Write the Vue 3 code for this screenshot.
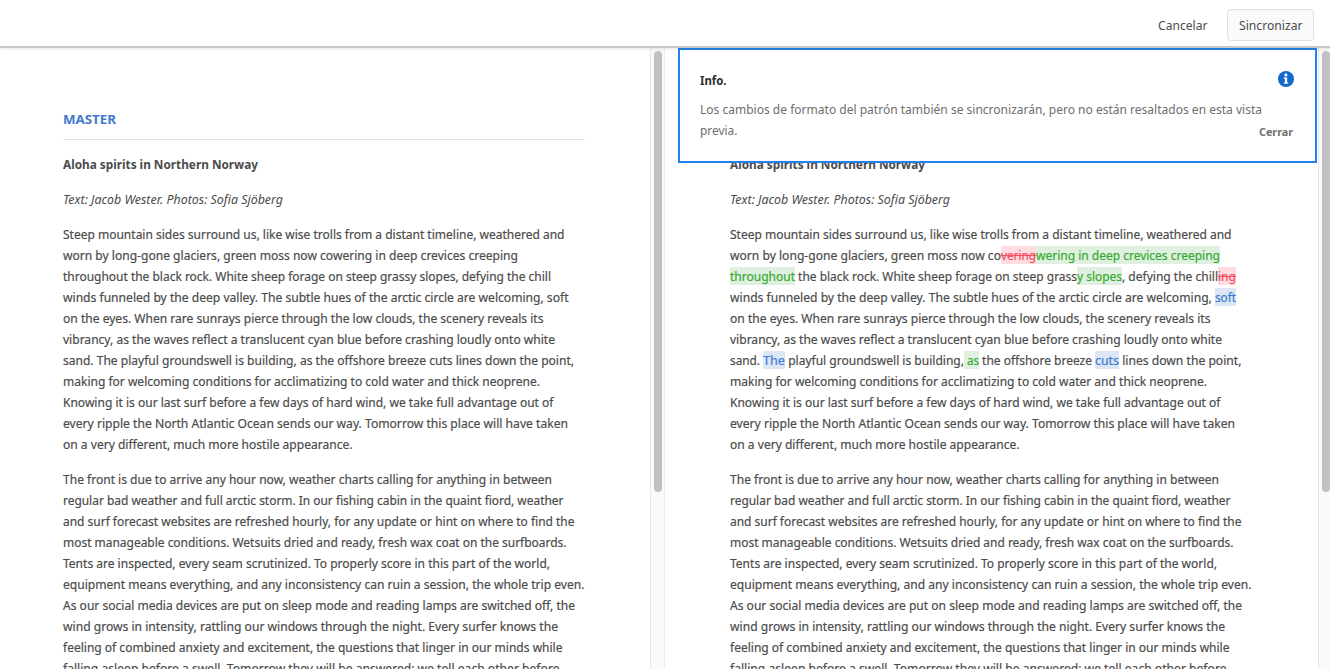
<script setup>
// Stretches a run of text horizontally so that it fills the given width.
const vFit = {
  mounted(el, binding) {
    const natural = el.getBoundingClientRect().width
    if (natural > 0) {
      el.style.transform = `scaleX(${binding.value / natural})`
      el.parentElement.style.width = `${binding.value}px`
    }
  },
}

const line = (w, t) => [{ w, t }]

const title = line(195, 'Aloha spirits in Northern Norway')
const byline = line(220, 'Text: Jacob Wester. Photos: Sofia Sjöberg')

const first = [
  line(501.5, 'Steep mountain sides surround us, like wise trolls from a distant timeline, weathered and'),
  line(455, 'worn by long-gone glaciers, green moss now cowering in deep crevices creeping'),
  line(488, 'throughout the black rock. White sheep forage on steep grassy slopes, defying the chill'),
  line(505.5, 'winds funneled by the deep valley. The subtle hues of the arctic circle are welcoming, soft'),
  line(480.5, 'on the eyes. When rare sunrays pierce through the low clouds, the scenery reveals its'),
  line(492, 'vibrancy, as the waves reflect a translucent cyan blue before crashing loudly onto white'),
  line(511, 'sand. The playful groundswell is building, as the offshore breeze cuts lines down the point,'),
  line(477, 'making for welcoming conditions for acclimatizing to cold water and thick neoprene.'),
  line(490.5, 'Knowing it is our last surf before a few days of hard wind, we take full advantage out of'),
  line(505, 'every ripple the North Atlantic Ocean sends our way. Tomorrow this place will have taken'),
  line(289.5, 'on a very different, much more hostile appearance.'),
]

const second = [
  line(489, 'The front is due to arrive any hour now, weather charts calling for anything in between'),
  line(500.5, 'regular bad weather and full arctic storm. In our fishing cabin in the quaint fiord, weather'),
  line(511.5, 'and surf forecast websites are refreshed hourly, for any update or hint on where to find the'),
  line(503.5, 'most manageable conditions. Wetsuits dried and ready, fresh wax coat on the surfboards.'),
  line(487, 'Tents are inspected, every seam scrutinized. To properly score in this part of the world,'),
  line(521.5, 'equipment means everything, and any inconsistency can ruin a session, the whole trip even.'),
  line(512, 'As our social media devices are put on sleep mode and reading lamps are switched off, the'),
  line(495, 'wind grows in intensity, rattling our windows through the night. Every surfer knows the'),
  line(499.5, 'feeling of combined anxiety and excitement, the questions that linger in our minds while'),
  line(496.5, 'falling asleep before a swell. Tomorrow they will be answered; we tell each other before'),
]

const changed = [...first]
changed[1] = [
  { w: 271, t: 'worn by long-gone glaciers, green moss now co' },
  { w: 35, t: 'vering', kind: 'removed' },
  { w: 184, t: 'wering in deep crevices creeping', kind: 'added' },
]
changed[2] = [
  { w: 65, t: 'throughout', kind: 'added' },
  { w: 282, t: ' the black rock. White sheep forage on steep grass' },
  { w: 45, t: 'y slopes', kind: 'added' },
  { w: 96, t: ', defying the chill' },
  { w: 18, t: 'ing', kind: 'removed' },
]
changed[3] = [
  { w: 485, t: 'winds funneled by the deep valley. The subtle hues of the arctic circle are welcoming, ' },
  { w: 21, t: 'soft', kind: 'edited' },
]
changed[6] = [
  { w: 33, t: 'sand. ' },
  { w: 22, t: 'The', kind: 'edited' },
  { w: 179, t: ' playful groundswell is building,' },
  { w: 15, t: ' as', kind: 'added' },
  { w: 116, t: ' the offshore breeze ' },
  { w: 24, t: 'cuts', kind: 'edited' },
  { w: 122.5, t: ' lines down the point,' },
]

const panes = [
  { name: 'master', heading: 'MASTER', blocks: [{ type: 'title', lines: [title] }, { type: 'byline', lines: [byline] }, { type: 'body', lines: first }, { type: 'body', lines: second }] },
  { name: 'copy', heading: '', blocks: [{ type: 'title', lines: [title] }, { type: 'byline', lines: [byline] }, { type: 'body', lines: changed }, { type: 'body', lines: second }] },
]
</script>

<template>
  <div class="app">
    <header class="bar">
      <button class="btn plain"><span class="slot"><span v-fit="49.5" class="fit">Cancelar</span></span></button>
      <button class="btn boxed"><span class="slot"><span v-fit="63.5" class="fit">Sincronizar</span></span></button>
    </header>

    <main class="panes">
      <section v-for="pane in panes" :key="pane.name" class="pane" :class="pane.name">
        <div class="content">
          <h2 class="heading"><span v-if="pane.heading" class="slot"><span v-fit="53" class="fit">{{ pane.heading }}</span></span></h2>
          <div v-for="(block, b) in pane.blocks" :key="b" class="block" :class="block.type">
            <div v-for="(segments, l) in block.lines" :key="l" class="line"><span v-for="(s, i) in segments" :key="i" class="slot" :class="s.kind"><span v-fit="s.w" class="fit">{{ s.t }}</span></span></div>
          </div>
        </div>
        <div class="track"><div class="thumb"></div></div>
      </section>

      <aside class="alert">
        <div class="alert-head">
          <strong class="slot"><span v-fit="26.5" class="fit">Info.</span></strong>
          <svg class="info" viewBox="0 0 16 16" width="16" height="16">
            <circle cx="8" cy="8" r="8" fill="#1368ce" />
            <circle cx="7.9" cy="3.9" r="1.55" fill="#fff" />
            <path d="M5.8 6.5h3.4v4.9h1.1v1.4H5.8v-1.4h1.1V7.9H5.8z" fill="#fff" />
          </svg>
        </div>
        <div class="alert-text">
          <div class="line"><span class="slot"><span v-fit="562" class="fit">Los cambios de formato del patrón también se sincronizarán, pero no están resaltados en esta vista</span></span></div>
          <div class="line last">
            <span class="slot"><span v-fit="37.5" class="fit">previa.</span></span>
            <button class="close"><span class="slot"><span v-fit="34" class="fit">Cerrar</span></span></button>
          </div>
        </div>
      </aside>
    </main>
  </div>
</template>

<style>
body {
  margin: 0;
  overflow: hidden;
  background: #fff;
}
</style>

<style scoped>
.app {
  display: flex;
  flex-direction: column;
  width: 1330px;
  height: 669px;
  overflow: hidden;
  font-family: "Noto Sans", "Open Sans", sans-serif;
  font-size: 13px;
  line-height: 21px;
  color: #4b4b4b;
}
.slot {
  display: inline-block;
  height: 18px;
  line-height: 19px;
  white-space: pre;
  vertical-align: top;
}
.fit {
  display: inline-block;
  transform-origin: 0 50%;
  white-space: pre;
}
.body .fit {
  -webkit-text-stroke: 0.2px currentColor;
}
.bar {
  position: relative;
  z-index: 1;
  box-sizing: border-box;
  flex: none;
  display: flex;
  justify-content: flex-end;
  align-items: flex-start;
  gap: 8px;
  height: 48px;
  padding: 9px 16px 0 0;
  border-bottom: 2px solid #c8c8c8;
  background: #fff;
  box-shadow: 0 1px 3px rgba(0, 0, 0, 0.1);
}
.btn {
  box-sizing: border-box;
  height: 32px;
  padding: 6px 11px 0;
  border: 1px solid transparent;
  border-radius: 4px;
  background: transparent;
  font: inherit;
  color: #4b4b4b;
  text-align: left;
  display: flex;
}
.boxed {
  width: 87px;
  border-color: #e1e1e1;
  background: #fafafa;
}
.panes {
  position: relative;
  flex: 1;
  min-height: 0;
  display: grid;
  grid-template-columns: 665px 665px;
}
.pane {
  display: flex;
  min-width: 0;
  overflow: hidden;
}
.content {
  box-sizing: border-box;
  flex: 1;
  min-width: 0;
  padding: 61px 65px 0 63px;
}
.copy .content {
  padding-left: 65px;
}
.heading {
  box-sizing: border-box;
  height: 31px;
  margin: 0 0 14px;
  padding-top: 1px;
  border-bottom: 1px solid #e1e1e1;
  font-size: 13px;
  font-weight: 700;
  color: #4179cf;
}
.block {
  margin-bottom: 14px;
}
.line {
  height: 21px;
  padding-top: 1px;
  box-sizing: border-box;
  white-space: nowrap;
}
.title {
  font-weight: 700;
}
.byline {
  font-style: italic;
}
.added {
  color: #33ab2f;
  background: #e0f0e0;
}
.removed {
  color: #f44e5f;
  background: #ffdcdf;
}
.removed .fit {
  text-decoration: line-through;
}
.edited {
  color: #3c7bd0;
  background: #dce6f5;
}
.track {
  box-sizing: border-box;
  flex: none;
  width: 15px;
  padding: 3px 0 0 3px;
  border-left: 1px solid #e6e6e6;
  border-right: 1px solid #ececec;
  background: #fafafa;
}
.copy .track {
  width: 12px;
  border-right: 0;
}
.thumb {
  width: 8px;
  height: 441px;
  border-radius: 4px;
  background: #c1c1c1;
}
.alert {
  position: absolute;
  left: 678px;
  top: 0;
  box-sizing: border-box;
  width: 639px;
  height: 115px;
  padding: 21px 21px 0 20px;
  border: 2px solid #2680eb;
  background: #fff;
  color: #6e6e6e;
}
.alert-head {
  display: flex;
  justify-content: space-between;
  align-items: flex-start;
  height: 28px;
  font-size: 12.5px;
  color: #2c2c2c;
}
.info {
  display: block;
}
.last {
  display: flex;
  justify-content: space-between;
}
.close {
  padding: 0;
  border: 0;
  background: transparent;
  font: 700 11px/18px "Noto Sans", "Open Sans", sans-serif;
  color: #6e6e6e;
  margin-right: 1px;
}
</style>
